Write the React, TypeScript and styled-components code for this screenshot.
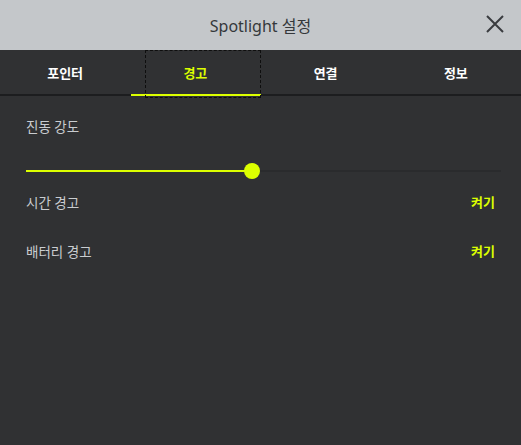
import { useState } from "react";
import { styled, createGlobalStyle } from "styled-components";

const GlobalStyle = createGlobalStyle`
  html, body {
    margin: 0;
    padding: 0;
    background: #303133;
  }
  body {
    font-family: "Noto Sans", "Noto Sans CJK KR", sans-serif;
  }
`;

const Wrapper = styled.div`
  width: 521px;
  height: 445px;
  display: flex;
  flex-direction: column;
  background: #303133;
`;

const Header = styled.header`
  height: 50px;
  background: #c4c7ca;
  display: flex;
  align-items: center;
  justify-content: center;
  position: relative;
`;

const Title = styled.h1`
  margin: 0;
  font-size: 16px;
  font-weight: 400;
  color: #35383b;
`;

const CloseButton = styled.button`
  position: absolute;
  right: 16px;
  top: 14px;
  width: 20px;
  height: 20px;
  padding: 0;
  border: none;
  background: none;
  display: flex;
  align-items: center;
  justify-content: center;
`;

const TabBar = styled.nav`
  height: 46px;
  display: grid;
  grid-template-columns: repeat(4, 1fr);
  border-bottom: 2px solid #1c1d1f;
  box-sizing: border-box;
`;

const Tab = styled.button<{ $active?: boolean }>`
  position: relative;
  border: none;
  background: none;
  padding: 0;
  font-family: inherit;
  font-size: 13px;
  font-weight: 700;
  color: ${(p) => (p.$active ? "#dcff00" : "#ffffff")};
  cursor: pointer;
  &::before {
    content: "";
    display: ${(p) => (p.$active ? "block" : "none")};
    position: absolute;
    left: 1px;
    right: 0;
    bottom: -2px;
    height: 2px;
    background: #dcff00;
  }
  &::after {
    content: "";
    display: ${(p) => (p.$active ? "block" : "none")};
    position: absolute;
    left: 15px;
    right: 0;
    top: 0;
    bottom: -4px;
    border: 1px dashed #0e0e0e;
  }
`;

const Content = styled.main`
  padding: 20px 20px 0 26px;
  display: flex;
  flex-direction: column;
`;

const Label = styled.span`
  font-size: 13.5px;
  color: #c9ccd0;
`;

const SliderTrack = styled.div`
  position: relative;
  height: 2px;
  margin: 34px 0 0 0;
  background: #2a2b2d;
`;

const SliderFill = styled.div`
  height: 100%;
  background: #dcff00;
`;

const SliderThumb = styled.div`
  position: absolute;
  top: 50%;
  width: 16px;
  height: 16px;
  margin: -8px 0 0 -8px;
  border-radius: 50%;
  background: #dcff00;
`;

const Row = styled.div`
  display: flex;
  justify-content: space-between;
  align-items: center;
  height: 49px;
  padding-right: 6px;
`;

const FirstRow = styled(Row)`
  margin-top: 5px;
`;

const Value = styled.span`
  font-size: 13px;
  font-weight: 700;
  color: #dcff00;
`;

const tabs = ["포인터", "경고", "연결", "정보"];

export default function App() {
  const [active, setActive] = useState(1);
  const level = 47.6;

  return (
    <Wrapper>
      <GlobalStyle />
      <Header>
        <Title>Spotlight 설정</Title>
        <CloseButton aria-label="닫기">
          <svg width="20" height="20" viewBox="0 0 20 20">
            <path d="M2 2 L18 18 M18 2 L2 18" stroke="#3a3c3f" strokeWidth="2" />
          </svg>
        </CloseButton>
      </Header>
      <TabBar>
        {tabs.map((t, i) => (
          <Tab key={t} $active={i === active} onClick={() => setActive(i)}>
            {t}
          </Tab>
        ))}
      </TabBar>
      <Content>
        <Label>진동 강도</Label>
        <SliderTrack>
          <SliderFill style={{ width: `${level}%` }} />
          <SliderThumb style={{ left: `${level}%` }} />
        </SliderTrack>
        <FirstRow>
          <Label>시간 경고</Label>
          <Value>켜기</Value>
        </FirstRow>
        <Row>
          <Label>배터리 경고</Label>
          <Value>켜기</Value>
        </Row>
      </Content>
    </Wrapper>
  );
}
